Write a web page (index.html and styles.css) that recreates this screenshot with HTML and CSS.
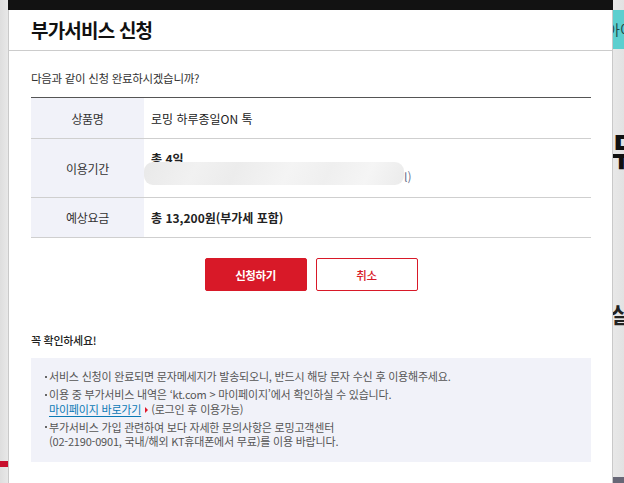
FILE: index.html
```html
<!DOCTYPE html>
<html lang="ko">
<head>
<meta charset="utf-8">
<title>부가서비스 신청</title>
<link rel="stylesheet" href="styles.css">
</head>
<body>
<div class="page">
  <div class="behind behind-teal">아이</div>
  <div class="behind behind-big">듀</div>
  <div class="behind behind-sal">살</div>
  <div class="behind behind-red"></div>
  <div class="behind behind-dark"></div>

  <div class="modal">
    <div class="modal-top"></div>
    <header class="modal-head">
      <h1 class="modal-title">부가서비스 신청</h1>
    </header>
    <div class="modal-body">
      <p class="intro">다음과 같이 신청 완료하시겠습니까?</p>

      <div class="info-table">
        <div class="info-row row-1">
          <div class="info-label">상품명</div>
          <div class="info-value">로밍 하루종일ON 톡</div>
        </div>
        <div class="info-row row-2">
          <div class="info-label">이용기간</div>
          <div class="info-value stacked">
            <div class="strong">총 4일</div>
            <div class="period-sub"><span class="blur"></span><span class="tail">l)</span></div>
          </div>
        </div>
        <div class="info-row row-3">
          <div class="info-label">예상요금</div>
          <div class="info-value strong">총 13,200원(부가세 포함)</div>
        </div>
      </div>

      <div class="actions">
        <button class="btn btn-primary" type="button">신청하기</button>
        <button class="btn btn-outline" type="button">취소</button>
      </div>

      <p class="notice-title">꼭 확인하세요!</p>
      <div class="notice-box">
        <ul class="notice-list">
          <li>서비스 신청이 완료되면 문자메세지가 발송되오니, 반드시 해당 문자 수신 후 이용해주세요.</li>
          <li>이용 중 부가서비스 내역은 ‘kt.com &gt; 마이페이지’에서 확인하실 수 있습니다.<br><a class="notice-link" href="#">마이페이지 바로가기</a><span class="tri"></span>(로그인 후 이용가능)</li>
          <li>부가서비스 가입 관련하여 보다 자세한 문의사항은 로밍고객센터<br>(02-2190-0901, 국내/해외 KT휴대폰에서 무료)를 이용 바랍니다.</li>
        </ul>
      </div>
    </div>
  </div>
</div>
</body>
</html>
```

FILE: styles.css
```css
* { box-sizing: border-box; }

html, body {
  margin: 0;
  padding: 0;
}

body {
  font-family: "Noto Sans CJK KR", "Noto Sans", sans-serif;
  background: #e4e4e4;
  color: #222;
  overflow: hidden;
}

.page {
  position: relative;
  width: 624px;
  height: 483px;
  overflow: hidden;
  background: linear-gradient(to right, #dedede 0, #e8e8e8 8px, #e8e8e8 613px, #e2e2e2 624px);
}

/* fragments of the page behind the modal */
.behind { position: absolute; }
.behind-teal {
  left: 613px;
  top: 10px;
  width: 30px;
  height: 39px;
  background: #5ccfcf;
  color: #1c4a4a;
  font-size: 14px;
  line-height: 39px;
  text-indent: -6px;
  overflow: hidden;
}
.behind-big {
  left: 610px;
  top: 124px;
  font-size: 38px;
  font-weight: bold;
  color: #111;
  line-height: 50px;
}
.behind-sal {
  left: 611px;
  top: 298px;
  font-size: 22px;
  font-weight: bold;
  color: #222;
  line-height: 30px;
}
.behind-red {
  left: 0;
  top: 461px;
  width: 8px;
  height: 6px;
  background: #c8102e;
}
.behind-dark {
  left: 613px;
  top: 477px;
  width: 11px;
  height: 6px;
  background: #676776;
}

.modal {
  position: relative;
  margin-left: 8px;
  width: 605px;
  height: 483px;
  background: #fff;
  border-left: 1px solid #c9c9c9;
  border-right: 1px solid #c9c9c9;
  z-index: 1;
}

.modal-top {
  height: 10px;
  background: #121212;
  margin: 0 -1px;
}

.modal-head {
  height: 41px;
  border-bottom: 1px solid #cccccc;
  display: flex;
  align-items: center;
  padding-left: 22px;
}

.modal-title {
  margin: 0;
  font-size: 19px;
  font-weight: bold;
  color: #111;
  letter-spacing: -0.8px;
  line-height: 24px;
}

.modal-body {
  padding: 0 21px 0 22px;
}

.intro {
  margin: 19px 0 0;
  font-size: 11.5px;
  line-height: 16px;
  color: #333;
  letter-spacing: -0.3px;
}

.info-table {
  margin-top: 11px;
  border-top: 1px solid #555;
}

.info-row {
  display: grid;
  grid-template-columns: 113px 1fr;
  border-bottom: 1px solid #cfcfcf;
}
.row-1 { height: 41px; }
.row-2 { height: 59px; }
.row-3 { height: 40px; }

.info-label {
  background: #f1f2f9;
  display: flex;
  align-items: center;
  justify-content: center;
  font-size: 12px;
  color: #333;
  letter-spacing: -0.3px;
}

.info-value {
  display: flex;
  align-items: center;
  padding-left: 7px;
  font-size: 12px;
  color: #222;
  letter-spacing: 0;
}

.info-value.stacked {
  flex-direction: column;
  align-items: flex-start;
  justify-content: center;
  line-height: 18px;
}

.strong { font-weight: bold; }

.period-sub {
  position: relative;
  height: 18px;
  padding-left: 253px;
  font-size: 12px;
  color: #6f7590;
}

.blur {
  position: absolute;
  left: -7px;
  top: -6px;
  width: 260px;
  height: 23px;
  border-radius: 9px;
  background: linear-gradient(115deg, #e9e9e9 0%, #f1f1f1 20%, #ececec 35%, #f4f4f4 55%, #efefef 70%, #f5f5f5 85%, #ebebeb 100%);
}

.actions {
  margin-top: 20px;
  display: flex;
  justify-content: center;
  gap: 9px;
}

.btn {
  width: 102px;
  height: 33px;
  border-radius: 2px;
  font-family: "Noto Sans CJK KR", "Noto Sans", sans-serif;
  font-size: 11.5px;
  letter-spacing: -0.4px;
  cursor: pointer;
  padding: 0;
}

.btn-primary {
  background: #d81928;
  border: 1px solid #d81928;
  color: #fff;
  font-weight: bold;
}

.btn-outline {
  background: #fff;
  border: 1px solid #d81928;
  color: #d81928;
  font-weight: 500;
}

.notice-title {
  margin: 41px 0 0;
  font-size: 11px;
  line-height: 16px;
  font-weight: 500;
  color: #222;
  letter-spacing: -0.3px;
}

.notice-box {
  margin-top: 10px;
  background: #f1f2f9;
  height: 104px;
  padding: 11px 0 0 18px;
}

.notice-list {
  list-style: none;
  margin: 0;
  padding: 0;
  font-size: 11px;
  line-height: 14.5px;
  color: #555;
  letter-spacing: -0.2px;
}

.notice-list li {
  position: relative;
}
.notice-list li + li { margin-top: 3.5px; }

.notice-list li::before {
  content: "";
  position: absolute;
  left: -4px;
  top: 6.5px;
  width: 2px;
  height: 2px;
  background: #666;
}

.notice-link {
  color: #0b79b5;
  text-decoration: underline;
  text-underline-offset: 2px;
}

.tri {
  display: inline-block;
  width: 0;
  height: 0;
  margin: 0 3px 0 4px;
  border-top: 3px solid transparent;
  border-bottom: 3px solid transparent;
  border-left: 3px solid #e0182a;
  vertical-align: 1px;
}
```
